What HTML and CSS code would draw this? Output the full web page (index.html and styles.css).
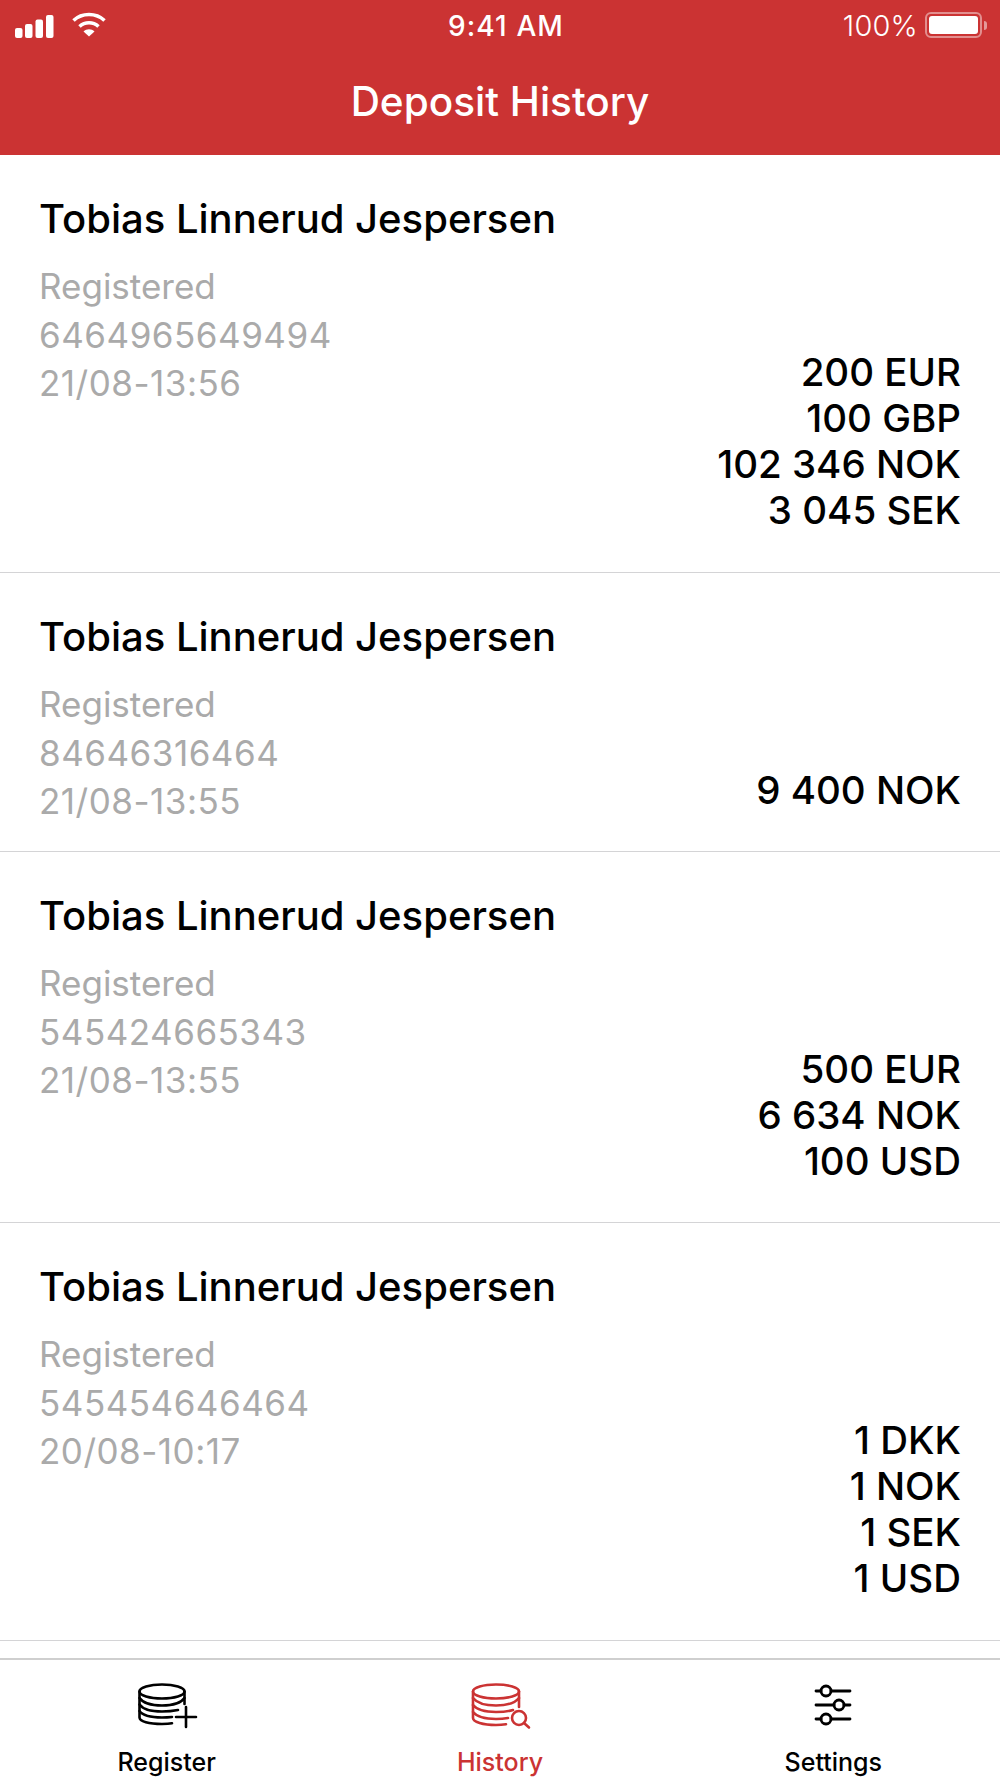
FILE: index.html
```html
<!DOCTYPE html>
<html lang="en">
<head>
<meta charset="utf-8">
<title>Deposit History</title>
<link rel="stylesheet" href="styles.css">
</head>
<body>
<div class="app">
  <header class="header">
    <div class="status">
      <div class="status-left">
        <svg class="signal" viewBox="0 0 40 24" width="40" height="24"><g fill="#fff"><rect x="0" y="13" width="7.5" height="10" rx="2"/><rect x="10" y="9" width="7.5" height="14" rx="2"/><rect x="20.5" y="4.5" width="7.5" height="18.5" rx="2"/><rect x="31" y="0" width="7.5" height="23" rx="2"/></g></svg>
        <svg class="wifi" viewBox="0 0 34 25" width="34" height="25"><g fill="none" stroke="#fff" stroke-width="3.6"><path d="M1.500 8.500C10 .5 24 .5 32.500 8.500"/><path d="M7.500 14.500C13 9.500 21 9.500 26.500 14.500"/></g><path fill="#fff" d="M11.500 19.500C14.500 16.600 19.500 16.600 22.500 19.500L17 24.500Z"/></svg>
      </div>
      <div class="time">9:41 AM</div>
      <div class="status-right">
        <span class="pct">100%</span>
        <div class="battery"><div class="battery-fill"></div></div>
        <div class="battery-nub"></div>
      </div>
    </div>
    <h1 class="title">Deposit History</h1>
  </header>

  <main class="list">
    <article class="row row-a">
      <h2 class="name">Tobias Linnerud Jespersen</h2>
      <div class="row-body">
        <div class="meta"><div>Registered</div><div class="num">6464965649494</div><div class="num">21/08-13:56</div></div>
        <div class="amounts"><div>200 EUR</div><div>100 GBP</div><div>102 346 NOK</div><div>3 045 SEK</div></div>
      </div>
    </article>
    <article class="row row-b">
      <h2 class="name">Tobias Linnerud Jespersen</h2>
      <div class="row-body">
        <div class="meta"><div>Registered</div><div class="num">84646316464</div><div class="num">21/08-13:55</div></div>
        <div class="amounts"><div>9 400 NOK</div></div>
      </div>
    </article>
    <article class="row row-c">
      <h2 class="name">Tobias Linnerud Jespersen</h2>
      <div class="row-body">
        <div class="meta"><div>Registered</div><div class="num">545424665343</div><div class="num">21/08-13:55</div></div>
        <div class="amounts"><div>500 EUR</div><div>6 634 NOK</div><div>100 USD</div></div>
      </div>
    </article>
    <article class="row row-a">
      <h2 class="name">Tobias Linnerud Jespersen</h2>
      <div class="row-body">
        <div class="meta"><div>Registered</div><div class="num">545454646464</div><div class="num">20/08-10:17</div></div>
        <div class="amounts"><div>1 DKK</div><div>1 NOK</div><div>1 SEK</div><div>1 USD</div></div>
      </div>
    </article>
  </main>

  <nav class="tabbar">
    <a class="tab">
      <svg class="tab-icon" viewBox="0 0 66 48" width="66" height="48" fill="none" stroke="currentColor" stroke-width="2.6" stroke-linecap="round">
        <ellipse cx="28" cy="9.500" rx="22.500" ry="7"/>
        <path d="M5.500 9.500V35.500C5.500 39.500 15 42 28 42C32 42 36 41.700 38 41.300"/>
        <path d="M50.500 9.500V22"/>
        <path d="M5.500 16C9 21 18 23.500 28 23.500C38 23.500 47 21 50.500 16"/>
        <path d="M5.500 22.500C9 27.500 18 29.500 28 29.500C34 29.500 39 29 44 28"/>
        <path d="M5.500 29C9 34 18 35.500 28 35.500C32 35.500 35 35.300 38 35"/>
        <path d="M52 25V45M42 35H62"/>
      </svg>
      <span class="tab-label">Register</span>
    </a>
    <a class="tab tab-active">
      <svg class="tab-icon" viewBox="0 0 66 48" width="66" height="48" fill="none" stroke="currentColor" stroke-width="2.600" stroke-linecap="round">
        <ellipse cx="29" cy="9.500" rx="23" ry="7"/>
        <path d="M6 9.500V36C6 40 16 43 29 43C32 43 36 42.700 39 42.200"/>
        <path d="M52 9.500V25"/>
        <path d="M6 16C10 21 19 23.500 29 23.500C39 23.500 48 21 52 16"/>
        <path d="M6 23C10 28 19 30 29 30C36 30 42 29.200 46 28"/>
        <path d="M6 30C10 35 19 37 29 37C33 37 37 36.700 41 36"/>
        <circle cx="52" cy="36" r="7"/>
        <path d="M57 41L62 45.500"/>
      </svg>
      <span class="tab-label">History</span>
    </a>
    <a class="tab">
      <svg class="tab-icon" viewBox="0 0 66 48" width="66" height="48" fill="none" stroke="currentColor" stroke-width="2.800" stroke-linecap="round">
        <path d="M16 9H21M31 9H50M16 23H34M44 23H50M16 37H21M31 37H50"/>
        <circle cx="26" cy="9" r="5"/>
        <circle cx="39" cy="23" r="5"/>
        <circle cx="26" cy="37" r="5"/>
      </svg>
      <span class="tab-label">Settings</span>
    </a>
  </nav>
</div>
</body>
</html>
```
FILE: styles.css
```css
* { box-sizing: border-box; }
html, body { margin: 0; padding: 0; background: #fff; }
body { font-family: Inter, "Liberation Sans", sans-serif; color: #000; }
.app { width: 1000px; height: 1778px; display: flex; flex-direction: column; overflow: hidden; }

.header { height: 155px; background: #cb3333; color: #fff; flex: none; }
.status { height: 50px; display: grid; grid-template-columns: 1fr auto 1fr; align-items: center; padding: 0 13px 0 15px; }
.status-left { display: flex; align-items: center; gap: 17px; }
.signal { margin-top: 3px; }
.wifi { margin-top: -1px; }
.time { font-size: 28px; font-weight: 500; letter-spacing: 1.1px; margin-left: 10px; margin-top: 1px; }
.status-right { display: flex; align-items: center; justify-content: flex-end; }
.pct { font-size: 29px; font-weight: 300; margin-right: 7px; margin-top: 1px; letter-spacing: .2px; }
.battery { width: 57px; height: 26px; border: 2px solid rgba(255,255,255,.45); border-radius: 6px; padding: 2px; }
.battery-fill { height: 100%; background: #fff; border-radius: 3px; }
.battery-nub { width: 3px; height: 9px; margin-left: 2px; background: rgba(255,255,255,.5); border-radius: 0 3px 3px 0; }
.title { margin: 0; font-size: 40.500px; font-weight: 500; line-height: 48px; text-align: center; padding-top: 28px; height: 76px; }

.list { flex: 1; overflow: hidden; }
.row { border-bottom: 1px solid #d4d4d6; padding: 40px 39px 0 40px; }
.row-a { height: 418px; }
.row-b { height: 279px; }
.row-c { height: 371px; }
.name { margin: 0; font-size: 40px; font-weight: 500; line-height: 48px; margin-left: -1px; }
.row-body { display: flex; justify-content: space-between; align-items: flex-start; margin-top: 19px; }
.meta { font-size: 35px; font-weight: 400; line-height: 48.500px; color: #aaaaaa; margin-left: -1px; }
.num { letter-spacing: .5px; }
.amounts { font-size: 38.500px; font-weight: 500; line-height: 46px; text-align: right; margin-top: 87px; }

.tabbar { flex: none; height: 120px; border-top: 2px solid #cfcfcf; display: grid; grid-template-columns: repeat(3, 1fr); background: #fff; }
.tab { display: flex; flex-direction: column; align-items: center; padding-top: 22px; color: #000; }
.tab-active { color: #cb3333; }
.tab-icon { display: block; }
.tab-label { font-size: 25px; font-weight: 500; line-height: 30px; margin-top: 17px; }
```
